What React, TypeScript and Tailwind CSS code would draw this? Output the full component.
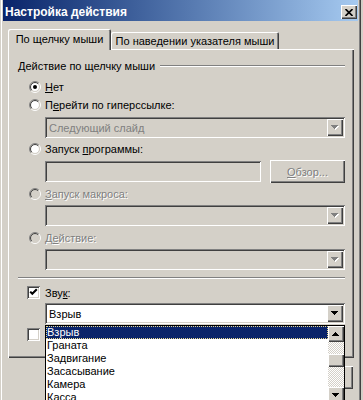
import React from "react";

const sunken =
  "shadow-[inset_1px_1px_0_#808080,inset_-1px_-1px_0_#ffffff,inset_2px_2px_0_#404040,inset_-2px_-2px_0_#d4d0c8]";
const raised =
  "shadow-[inset_1px_1px_0_#ffffff,inset_-1px_-1px_0_#404040,inset_-2px_-2px_0_#808080]";
const etched = "text-[#808080] [text-shadow:1px_1px_0_#ffffff]";

function Radio({ checked, disabled }: { checked?: boolean; disabled?: boolean }) {
  const a = 0.7071;
  const arc = (r: number, tl: boolean) => {
    const x1 = 6 - r * a,
      y1 = 6 + r * a,
      x2 = 6 + r * a,
      y2 = 6 - r * a;
    return tl
      ? `M${x1} ${y1} A${r} ${r} 0 0 1 ${x2} ${y2}`
      : `M${x2} ${y2} A${r} ${r} 0 0 1 ${x1} ${y1}`;
  };
  return (
    <svg width="12" height="12" viewBox="0 0 12 12" className="shrink-0">
      <circle cx="6" cy="6" r="4.2" fill={disabled ? "#d4d0c8" : "#ffffff"} />
      <path d={arc(5.5, true)} stroke="#808080" fill="none" />
      <path d={arc(5.5, false)} stroke="#ffffff" fill="none" />
      <path d={arc(4.5, true)} stroke="#404040" fill="none" />
      <path d={arc(4.5, false)} stroke="#d4d0c8" fill="none" />
      {checked && <circle cx="6" cy="6" r="2" fill="#000000" />}
    </svg>
  );
}

function Checkbox({ checked }: { checked?: boolean }) {
  return (
    <div className={`w-[13px] h-[13px] bg-white ${sunken} shrink-0 relative`}>
      {checked && (
        <svg width="13" height="13" viewBox="0 0 13 13" className="absolute left-0 top-0">
          <path d="M3.2 5.6 L5.3 7.8 L9.8 3.3" stroke="#000000" strokeWidth="2.1" fill="none" />
        </svg>
      )}
    </div>
  );
}

function Arrow({ up, disabled }: { up?: boolean; disabled?: boolean }) {
  const rows = [0, 1, 2, 3];
  const rect = (i: number, dx: number, fill: string) => (
    <rect
      key={`${fill}${i}`}
      x={i + dx}
      y={(up ? 3 - i : i) + dx}
      width={7 - 2 * i}
      height={1}
      fill={fill}
    />
  );
  return (
    <svg width="8" height="5" viewBox="0 0 8 5" shapeRendering="crispEdges">
      {disabled && rows.map((i) => rect(i, 1, "#ffffff"))}
      {rows.map((i) => rect(i, 0, disabled ? "#808080" : "#000000"))}
    </svg>
  );
}

function Combo({ text, disabled, white }: { text?: string; disabled?: boolean; white?: boolean }) {
  return (
    <div
      className={`h-[21px] w-[300px] ${sunken} ${white ? "bg-white" : "bg-[#d4d0c8]"} flex items-center p-[2px]`}
    >
      <div className={`flex-1 pl-[2px] ${disabled ? "text-[#808080]" : "text-black"}`}>{text}</div>
      <div className={`w-[16px] h-[17px] bg-[#d4d0c8] ${raised} flex items-center justify-center`}>
        <Arrow disabled={disabled} />
      </div>
    </div>
  );
}

function RadioRow({
  children,
  checked,
  disabled,
}: {
  children: React.ReactNode;
  checked?: boolean;
  disabled?: boolean;
}) {
  return (
    <div className="flex items-center h-[14px] pl-[21px] gap-[4px]">
      <Radio checked={checked} disabled={disabled} />
      <span className={disabled ? etched : "text-black"}>{children}</span>
    </div>
  );
}

const U = ({ c }: { c: string }) => <span className="underline underline-offset-[1px]">{c}</span>;

export default function App() {
  const items = ["Взрыв", "Граната", "Задвигание", "Засасывание", "Камера", "Касса"];
  return (
    <div className="w-[363px] h-[400px] bg-[#d4d0c8] overflow-hidden relative font-['Liberation_Sans',Arial,sans-serif] text-[11px] leading-[14px] text-black">
      <div className="w-[361px] h-[400px] shadow-[inset_1px_0_0_#d4d0c8,inset_2px_0_0_#ffffff,inset_-1px_0_0_#404040,inset_-2px_0_0_#808080] flex flex-col">
        {/* title bar */}
        <div className="mx-[3px] h-[21px] bg-linear-to-r from-[#0a246a] to-[#a6caf0] flex items-center pt-[3px] pl-[2px] pr-[1px]">
          <span className="text-white font-bold text-[12px] flex-1">Настройка действия</span>
          <div className={`w-[16px] h-[14px] bg-[#d4d0c8] ${raised} flex items-center justify-center`}>
            <svg width="8" height="7" viewBox="0 0 8 7">
              <path d="M0.5 0 L7.5 7 M7.5 0 L0.5 7" stroke="#000000" strokeWidth="1.6" />
            </svg>
          </div>
        </div>

        <div className="px-[8px] pt-[8px] flex flex-col">
          {/* tabs */}
          <div className="flex items-end h-[20px] relative z-10">
            <div className="w-[103px] h-[21px] -mb-[1px] bg-[#d4d0c8] rounded-t-[2px] shadow-[inset_1px_1px_0_#ffffff,inset_-1px_0_0_#404040,inset_-2px_0_0_#808080] flex justify-center pt-[3px]">
              По щелчку мыши
            </div>
            <div className="w-[168px] h-[17px] rounded-t-[2px] shadow-[inset_1px_1px_0_#ffffff,inset_-1px_0_0_#404040,inset_-2px_0_0_#808080] flex justify-center pt-[2px]">
              По наведении указателя мыши
            </div>
          </div>

          {/* panel */}
          <div className={`h-[309px] w-[346px] ${raised} flex flex-col pt-[10px]`}>
            <div className="flex items-center h-[14px] pl-[10px] pr-[9px]">
              <span>Действие по щелчку мыши</span>
              <div className="flex-1 ml-[5px] h-[2px] border-t border-t-[#808080] border-b border-b-white" />
            </div>

            <div className="mt-[7px]">
              <RadioRow checked>
                <U c="Н" />ет
              </RadioRow>
            </div>
            <div className="mt-[4px]">
              <RadioRow>
                П<U c="е" />рейти по гиперссылке:
              </RadioRow>
            </div>
            <div className="mt-[5px] pl-[37px]">
              <Combo text="Следующий слайд" disabled />
            </div>
            <div className="mt-[4px]">
              <RadioRow>
                Запуск <U c="п" />рограммы:
              </RadioRow>
            </div>
            <div className="mt-[4px] pl-[37px] flex items-start h-[23px]">
              <div className={`mt-[1px] w-[216px] h-[21px] bg-[#d4d0c8] ${sunken}`} />
              <div
                className={`ml-[9px] w-[75px] h-[23px] ${raised} flex items-center justify-center ${etched}`}
              >
                <span>
                  <U c="О" />
                  бзор...
                </span>
              </div>
            </div>
            <div className="mt-[4px]">
              <RadioRow disabled>
                <U c="З" />
                апуск макроса:
              </RadioRow>
            </div>
            <div className="mt-[4px] pl-[37px]">
              <Combo disabled />
            </div>
            <div className="mt-[5px]">
              <RadioRow disabled>
                Д<U c="е" />йствие:
              </RadioRow>
            </div>
            <div className="mt-[4px] pl-[37px]">
              <Combo disabled />
            </div>

            <div className="mt-[7px] ml-[10px] mr-[9px] h-[2px] border-t border-t-[#808080] border-b border-b-white" />

            <div className="mt-[7px] flex items-center h-[13px] pl-[19px] gap-[5px]">
              <Checkbox checked />
              <span>
                Зву<U c="к" />:
              </span>
            </div>
            <div className="mt-[4px] pl-[37px]">
              <Combo text="Взрыв" white />
            </div>
            <div className="mt-[4px] flex items-center h-[13px] pl-[19px] gap-[5px]">
              <Checkbox />
            </div>
          </div>

          {/* buttons (mostly hidden behind the open list) */}
          <div className="mt-[8px] flex justify-end gap-[6px]">
            <div className={`w-[75px] h-[23px] ${raised}`} />
            <div className={`w-[75px] h-[23px] ${raised}`} />
          </div>
        </div>
      </div>

      {/* dropdown list */}
      <div className="absolute left-[45px] top-[325px] w-[300px] h-[79px] bg-white border border-black flex">
        <div className="flex-1 flex flex-col">
          {items.map((it, i) => (
            <div
              key={it}
              className={`h-[13px] leading-[13px] px-[1px] shrink-0 ${
                i === 0
                  ? "bg-[#0a246a] text-white outline-1 outline-dotted outline-[#e8d890] -outline-offset-1"
                  : ""
              }`}
            >
              {it}
            </div>
          ))}
        </div>
        <div className="w-[16px] flex flex-col">
          <div className={`h-[16px] bg-[#d4d0c8] ${raised} flex items-center justify-center`}>
            <Arrow up />
          </div>
          <div className="h-[12px] bg-[repeating-conic-gradient(#ffffff_0_25%,#d4d0c8_0_50%)] bg-size-[2px_2px]" />
          <div className={`h-[13px] bg-[#d4d0c8] ${raised}`} />
          <div className="h-[20px] bg-[repeating-conic-gradient(#ffffff_0_25%,#d4d0c8_0_50%)] bg-size-[2px_2px]" />
          <div className={`h-[16px] bg-[#d4d0c8] ${raised} flex items-center justify-center`}>
            <Arrow />
          </div>
        </div>
      </div>
    </div>
  );
}
